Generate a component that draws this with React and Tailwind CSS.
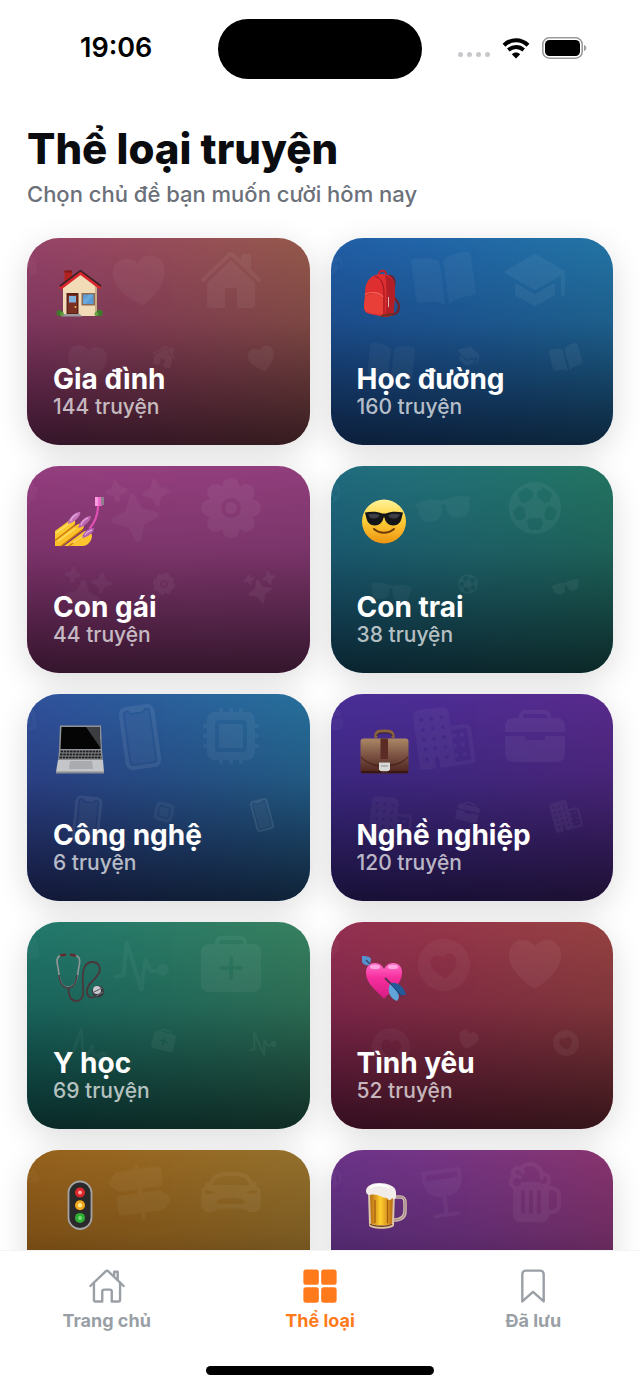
import React, { useState } from "react";
import {
  IoBeer,
  IoBook,
  IoBookmarkOutline,
  IoBriefcase,
  IoBusiness,
  IoCarSport,
  IoFlower,
  IoFootball,
  IoGlasses,
  IoGrid,
  IoHardwareChip,
  IoHeart,
  IoHeartCircle,
  IoHome,
  IoHomeOutline,
  IoMedkit,
  IoPhonePortrait,
  IoPulse,
  IoSchool,
  IoSparkles,
  IoTrailSign,
  IoWine
} from "react-icons/io5";

/* ---------- Card pictograms, all on a 52x52 box ---------- */

function Pictogram({ children }) {
  return (
    <svg viewBox="0 0 52 52" className="size-13" fill="none" aria-hidden="true">
      {children}
    </svg>
  );
}

function House() {
  return (
    <Pictogram>
      <path d="M11.5 3.5h7.5v10l-7.5 6z" fill="#b3221f" />
      <path d="M11.5 3.5h7.5v2h-7.5z" fill="#7d1a1a" />
      <path d="M10 20 27.5 6.5 42 18.5V49H10z" fill="#f2dcb8" />
      <path d="M42 18.5 44 20v28l-2 1z" fill="#c9ab84" />
      <path d="M7 21.5 27.5 6 47.5 21" stroke="#d9262c" strokeWidth="3.4" strokeLinejoin="round" />
      <path d="M7 19 27.5 3.6 48 19" stroke="#3b2227" strokeWidth="1.6" strokeLinejoin="round" />
      <path d="M13.5 26h12v21h-12z" fill="#5b231b" />
      <path d="M15 28h9v18h-9z" fill="#7c3021" />
      <path d="M16 29h7v6.5h-7z" fill="#7fb2dd" />
      <circle cx="22.5" cy="40" r="1" fill="#f0c050" />
      <path d="M28.5 26h13.5v12.5H28.5z" fill="#8d6b50" />
      <path d="M30 27.5h10.5V37H30z" fill="#5a9bd5" />
      <path d="M30 33l6-5.5h4.5L33 37h-3z" fill="#6ba8dc" />
      <path d="M11 47h16l2 2.5H8z" fill="#9a9a9e" />
      <circle cx="6.5" cy="46" r="3" fill="#3f7a2c" />
      <circle cx="9" cy="47" r="2" fill="#5d9a3c" />
      <circle cx="46.5" cy="46" r="3.2" fill="#3f7a2c" />
      <circle cx="43.5" cy="47" r="2" fill="#62a040" />
    </Pictogram>
  );
}

function Backpack() {
  return (
    <Pictogram>
      <path d="M22 8c-1-5 7-6 7-1" stroke="#c4232a" strokeWidth="2" />
      <path d="M31 9c8 0 7 7 5 15s6 9 6 15-3 9-8 8" stroke="#6e2430" strokeWidth="2.4" />
      <path d="M29 11c6 1 8 6 7 13" stroke="#4e252c" strokeWidth="1.5" />
      <path d="M8 26C8 14 14 7 25 7c9 0 13 6 13 14l-1 22c0 5-4 7-9 7L13 47c-4-1-6-3-6-7z" fill="#df2e30" />
      <path d="M28 8c7 2 10 7 10 13l-1 22c0 5-4 7-9 7 2-9 2-33 0-42z" fill="#b21f27" />
      <path d="M18 9c6 2 9 9 9 17v22" stroke="#a31b22" strokeWidth="1.2" />
      <path d="M8 30c2-4 15-4 18 1v17l-13-2c-4-1-6-3-6-7z" fill="#e83f39" />
      <path d="M8 28c3-4 15-3 18 2" stroke="#f3675b" strokeWidth="1.2" />
      <path d="M31 30v9l1 2V30z" fill="#d8b8b0" />
      <path d="M24 49l12-2" stroke="#6e3020" strokeWidth="2" />
    </Pictogram>
  );
}

function Nails() {
  return (
    <Pictogram>
      <path d="M2 36 17 25c4-2 7 2 4 5L2 46z" fill="#fdc930" />
      <path d="M2 44 25 29c5-2 8 2 4 6L9 51H2z" fill="#fbc02a" />
      <path d="M11 51 30 37c4-3 9 0 9 4 0 4-4 10-9 10z" fill="#fcc52f" />
      <path d="M2 45.5 22 30M8 51l21-16M16 51l14-10" stroke="#c9780c" strokeWidth="1.2" />
      <path d="M3 38 16 28.500M5 46l18-13M20 48l10-7" stroke="#ffe06a" strokeWidth="1.4" />
      <path d="M15 29c-1-5 8-13 12-12 2 3-6 11-12 12z" fill="#c574b8" />
      <path d="M25.5 33c-1-5 8-13 12-12 2 3-6 11-12 12z" fill="#bd66b0" />
      <path d="M29.500 43c-1-5 7-11 11-10 2 3-5 9-11 10z" fill="#b263b4" />
      <path d="M17.500 26c1-3 4-6 7-7M28 30c1-3 4-6 7-7M32 40c1-2 4-4 7-5" stroke="#edb3e6" strokeWidth="1.2" />
      <path d="M45 10c0 9-2 16-8 23" stroke="#e04fb4" strokeWidth="2.2" strokeLinecap="round" />
      <path d="M42 2h7v9h-7z" fill="#ee6bcb" />
      <path d="M42 2h3v9h-3z" fill="#ff9be3" />
      <path d="M48 2h3v8h-3z" fill="#8d808c" />
    </Pictogram>
  );
}

function CoolFace() {
  return (
    <Pictogram>
      <defs>
        <linearGradient id="coolFace" x1="0" y1="0" x2="0" y2="1">
          <stop offset="0" stopColor="#fff39a" />
          <stop offset="0.45" stopColor="#ffd03a" />
          <stop offset="1" stopColor="#ee9411" />
        </linearGradient>
      </defs>
      <circle cx="27" cy="26.5" r="22" fill="url(#coolFace)" />
      <path d="M8 17.500c6-1 13-1 17 1h4c4-2 11-2 17-1l-1 4c-1 6-4 9-9 9-5 0-8-4-8.500-8h-1c-.5 4-3.500 8-8.500 8s-8-3-9-9z" fill="#141519" />
      <path d="M11 19.500c4-1 9-1 12 1-1 2-4 3-7 3s-4-2-5-4zM31 20.500c3-2 8-2 12-1-1 2-3 4-6 4s-5-1-6-3z" fill="#3c3e45" />
      <path d="M17 34c6 5 14 5 20 0" stroke="#6b3a08" strokeWidth="2" strokeLinecap="round" />
    </Pictogram>
  );
}

function Laptop() {
  return (
    <Pictogram>
      <path d="M7 2.5h41L49 27H6z" fill="#8f9296" />
      <path d="M8.500 4h38l1 22H7.500z" fill="#050506" />
      <path d="M33 4h13.500l1 21z" fill="#3c3d40" />
      <path d="M6 27h43l1 11H5z" fill="#8e9093" />
      <path d="M7.500 28.500h40M7 31.500h41M6.500 34.500h42" stroke="#1d1e20" strokeWidth="2.2" strokeDasharray="2.6 0.6" />
      <path d="M5 37h45l1 12H3z" fill="#c3c5c8" />
      <path d="M17 38h22l1 8H16z" fill="#a9abae" />
      <path d="M3 48.500h48v2H3z" fill="#8b8d91" />
    </Pictogram>
  );
}

function Briefcase() {
  return (
    <Pictogram>
      <defs>
        <linearGradient id="caseLeather" x1="0" y1="0" x2="0" y2="1">
          <stop offset="0" stopColor="#ab8765" />
          <stop offset="0.5" stopColor="#7a5142" />
          <stop offset="1" stopColor="#4b211c" />
        </linearGradient>
      </defs>
      <path d="M19 15c-1-7 3-7 8-7s10 0 9 7" stroke="#8c643a" strokeWidth="3" />
      <path d="M20 13c0-3 3-3 7-3s8 0 8 3" stroke="#33202a" strokeWidth="1" />
      <rect x="3.5" y="15.5" width="48" height="35" rx="3" fill="url(#caseLeather)" />
      <path d="M4 33c6 7 14 9 23 9s18-2 24-9v2c-6 6-14 9-24 9S10 41 4 35z" fill="#3f1b18" opacity="0.6" />
      <path d="M23.500 15.500H31V36h-7.500z" fill="#5a2c25" />
      <path d="M22 39.500h11v7l-3 3h-5l-3-3z" fill="#d8d8d6" />
      <path d="M24 43h7" stroke="#8e8e8e" strokeWidth="1" />
      <path d="M4 49h47" stroke="#31120f" strokeWidth="1.5" />
    </Pictogram>
  );
}

function Stethoscope() {
  return (
    <Pictogram>
      <path d="M10 4C5 4 3 8 4.500 14c2 8 1 15 5 20 3 3 9 3 12-1 4-5 3-13 5-20 1-6-1-8.500-6-9" stroke="#8f9796" strokeWidth="1.6" />
      <path d="M6 24c1 11 5 13 9 13s8-3 9-13" stroke="#47464b" strokeWidth="1.8" />
      <path d="M8 4.300l4-.6M18 3.700l4 .8" stroke="#632a2b" strokeWidth="2.4" strokeLinecap="round" />
      <path d="M15.500 37c0 9 3 13 7.500 13 6 0 8-5 7-14-1-14 0-25 9-25 8 0 10 8 5 14-5 7-10 8-10 15 0 5 3 8 8 6" stroke="#4a363b" strokeWidth="1.8" />
      <circle cx="45" cy="40.5" r="6" fill="#3a383d" />
      <circle cx="44" cy="39" r="4" fill="#c9cacf" />
      <path d="M41 41l8-4M43 45l7-4" stroke="#69686d" strokeWidth="1.2" />
    </Pictogram>
  );
}

function ArrowHeart() {
  return (
    <Pictogram>
      <defs>
        <linearGradient id="arrowHeart" x1="0" y1="0" x2="0" y2="1">
          <stop offset="0" stopColor="#ff70cb" />
          <stop offset="0.4" stopColor="#f7309f" />
          <stop offset="1" stopColor="#d41a83" />
        </linearGradient>
      </defs>
      <path d="M5 5c4 0 7 0 9 3l-1 6c-4 1-8-1-8-4z" fill="#5493cf" />
      <path d="M9 9l7 7" stroke="#3a4a70" strokeWidth="1.5" />
      <path d="M27 48C21 41 9 33 9 22c0-7 4-10 9-10 4 0 7 2 9 6 2-4 5-6 9-6 6 0 9 4 9 10 0 11-12 19-18 26z" fill="url(#arrowHeart)" />
      <ellipse cx="18" cy="16" rx="5" ry="2.2" fill="#ffa6df" />
      <ellipse cx="36" cy="16" rx="5" ry="2.2" fill="#ffa6df" />
      <path d="M28 27l8 8" stroke="#54304e" strokeWidth="2" />
      <path d="M34 32c7-1 13 4 15 12-6 1-11-3-15-12z" fill="#235a99" />
      <path d="M33 33c-3 6-1 14 7 17 5-5-1-12-7-17z" fill="#5ea4d9" />
      <path d="M34 33l11 13" stroke="#173d70" strokeWidth="1" />
    </Pictogram>
  );
}

function TrafficLight() {
  return (
    <Pictogram>
      <rect x="15.5" y="2.5" width="23" height="47.5" rx="11.5" fill="#2b2a2b" stroke="#a6a3a5" strokeWidth="1.8" />
      <circle cx="27" cy="13.5" r="5" fill="#dd262b" />
      <circle cx="27" cy="13.5" r="2" fill="#ffa59a" />
      <circle cx="27" cy="26.2" r="5" fill="#f2a81d" />
      <circle cx="27" cy="26.2" r="2.2" fill="#ffe98a" />
      <circle cx="27" cy="38.9" r="5" fill="#2fae36" />
      <circle cx="27" cy="38.9" r="2" fill="#77e070" />
    </Pictogram>
  );
}

function BeerMug() {
  return (
    <Pictogram>
      <defs>
        <linearGradient id="beerFill" x1="0" y1="0" x2="1" y2="0">
          <stop offset="0" stopColor="#b86a12" />
          <stop offset="0.45" stopColor="#ffce2e" />
          <stop offset="1" stopColor="#b96a14" />
        </linearGradient>
      </defs>
      <path d="M37 18h6c4 0 5 2 5 6v8c0 6-4 9-11 9" stroke="#cfb9ac" strokeWidth="3.6" />
      <path d="M37 18h6c4 0 5 2 5 6v8c0 6-4 9-11 9" stroke="#8d6d77" strokeWidth="0.8" />
      <path d="M11 13h27l-1 33c0 5-25 5-25 0z" fill="#dcc5a4" />
      <path d="M13 14h23l-1 30c-1 3-20 3-21 0z" fill="url(#beerFill)" />
      <path d="M18 21v23M30.500 21v23" stroke="#a55a10" strokeWidth="1.2" />
      <path d="M13 45c4 3 19 3 22 0" stroke="#744018" strokeWidth="1.4" />
      <path d="M9 12c0-5 6-8 13-8 8 0 17 3 17 9v5c-1 3-3 2-4 1-1 3-4 2-5 0-6 0-9-5-17-3-3 0-4-2-4-4z" fill="#f1ecea" />
      <path d="M13 9c4-4 14-4 19 0" stroke="#ffffff" strokeWidth="2" />
    </Pictogram>
  );
}

/* ---------- Data ---------- */

const CATEGORIES = [
  { id: "family", name: "Gia đình", count: 144, Picture: House, Main: IoHome, Side: IoHeart, bg: "from-[#953a76] via-[#97485f] to-[#94584a]" },
  { id: "school", name: "Học đường", count: 160, Picture: Backpack, Main: IoSchool, Side: IoBook, bg: "from-[#2056a4] via-[#2164a8] to-[#2374a4]" },
  { id: "girls", name: "Con gái", count: 44, Picture: Nails, Main: IoFlower, Side: IoSparkles, bg: "from-[#943a7f] via-[#943f7f] to-[#903e7c]" },
  { id: "boys", name: "Con trai", count: 38, Picture: CoolFace, Main: IoFootball, Side: IoGlasses, bg: "from-[#1d6488] via-[#227079] to-[#237461]" },
  { id: "tech", name: "Công nghệ", count: 6, Picture: Laptop, Main: IoHardwareChip, Side: IoPhonePortrait, bg: "from-[#34439c] via-[#2c5a9c] to-[#26709b]" },
  { id: "jobs", name: "Nghề nghiệp", count: 120, Picture: Briefcase, Main: IoBriefcase, Side: IoBusiness, bg: "from-[#442e9b] via-[#4c2d94] to-[#582a8c]" },
  { id: "medical", name: "Y học", count: 69, Picture: Stethoscope, Main: IoMedkit, Side: IoPulse, bg: "from-[#18746f] via-[#277a69] to-[#37805f]" },
  { id: "love", name: "Tình yêu", count: 52, Picture: ArrowHeart, Main: IoHeart, Side: IoHeartCircle, bg: "from-[#93285a] via-[#95344c] to-[#964241]" },
  { id: "traffic", Picture: TrafficLight, Main: IoCarSport, Side: IoTrailSign, bg: "from-[#945b17] via-[#976620] to-[#93702c]" },
  { id: "drinks", Picture: BeerMug, Main: IoBeer, Side: IoWine, bg: "from-[#5f328c] via-[#733486] to-[#88336d]" }
];

const TABS = [
  { id: "home", label: "Trang chủ", Icon: IoHomeOutline },
  { id: "categories", label: "Thể loại", Icon: IoGrid },
  { id: "saved", label: "Đã lưu", Icon: IoBookmarkOutline }
];

/* ---------- Layout pieces ---------- */

function StatusBar() {
  return (
    <div className="relative h-24 shrink-0 flex items-center justify-between pl-20 pr-[53px]">
      <span className="text-[27px] leading-8 font-semibold text-black">19:06</span>
      <div className="absolute left-1/2 top-[19px] -translate-x-1/2 w-[204px] h-[60px] rounded-full bg-black" />
      <div className="flex items-center gap-3">
        <div className="flex gap-1 pt-3">
          <span className="size-[5px] rounded-full bg-[#c9c7cc]" />
          <span className="size-[5px] rounded-full bg-[#c9c7cc]" />
          <span className="size-[5px] rounded-full bg-[#c9c7cc]" />
          <span className="size-[5px] rounded-full bg-[#c9c7cc]" />
        </div>
        <svg viewBox="0 0 28 21" className="w-7 h-[21px]" fill="none" aria-hidden="true">
          <path d="M2 7.200c7-6.600 17-6.600 24 0" stroke="#000" strokeWidth="4.2" />
          <path d="M6.300 12c4.500-4 10.900-4 15.400 0" stroke="#000" strokeWidth="3.8" />
          <path d="M9.800 16.200c2.500-2.200 5.900-2.200 8.400 0L14 20.600z" fill="#000" />
        </svg>
        <svg viewBox="0 0 45 22" className="w-[45px] h-[22px]" fill="none" aria-hidden="true">
          <rect x="0.8" y="0.8" width="39.4" height="20.4" rx="6.5" stroke="#9b9b9d" strokeWidth="1.6" />
          <rect x="3" y="3" width="35" height="16" rx="4.5" fill="#000" />
          <path d="M42 8c3 1 3 5 0 6z" fill="#9b9b9d" />
        </svg>
      </div>
    </div>
  );
}

// Faint icons scattered behind the card text
function Watermark({ Main, Side }) {
  return (
    <div className="absolute inset-0 text-white/5" aria-hidden="true">
      <Main className="absolute -left-4 top-3 size-7 -rotate-12 opacity-60" />
      <Side className="absolute left-[81px] top-[11px] size-16 -rotate-8 opacity-80" />
      <Main className="absolute left-[172px] top-[10px] size-16" />
      <Side className="absolute left-9 top-[102px] size-12 rotate-6 opacity-80" />
      <Main className="absolute left-[125px] top-[106px] size-6 rotate-15" />
      <Side className="absolute left-[219px] top-[105px] size-8 -rotate-15" />
    </div>
  );
}

function CategoryCard({ category }) {
  const { name, count, Picture, Main, Side, bg } = category;

  return (
    <button
      type="button"
      className={`relative h-[207px] overflow-hidden rounded-[32px] bg-linear-60 ${bg} text-left`}
    >
      <div className="absolute inset-0 bg-linear-to-b from-black/0 via-black/16 via-40% to-black/65" />
      <Watermark Main={Main} Side={Side} />
      <div className="relative h-full flex flex-col justify-between px-[26px] pt-[29px] pb-[26px]">
        <Picture />
        {name && (
          <div className="flex flex-col">
            <span className="text-[28px] leading-8 font-bold text-white">{name}</span>
            <span className="text-[21px] leading-6 font-medium text-white/70">{count} truyện</span>
          </div>
        )}
      </div>
    </button>
  );
}

function TabBar({ active, onChange }) {
  return (
    <nav className="relative z-10 h-[138px] shrink-0 border-t border-[#f3f3f4] bg-white">
      <div className="grid grid-cols-3 pt-4">
        {TABS.map(({ id, label, Icon }) => (
          <a
            key={id}
            href={`#${id}`}
            onClick={() => onChange(id)}
            className={`flex flex-col items-center gap-1 ${active === id ? "text-[#ff7a1a]" : "text-[#9a9fa6]"}`}
          >
            <Icon className="size-[38px]" />
            <span className="text-[18px] leading-6 font-bold">{label}</span>
          </a>
        ))}
      </div>
      <div className="absolute bottom-[13px] left-1/2 -translate-x-1/2 w-[228px] h-[9px] rounded-full bg-black" />
    </nav>
  );
}

export default function App() {
  const [tab, setTab] = useState("categories");

  return (
    <div className="h-screen flex flex-col overflow-hidden bg-white font-['Inter',sans-serif]">
      <StatusBar />

      <main className="flex-1 min-h-0 overflow-hidden px-[27px] pt-7">
        <h1 className="text-[42px] leading-[50px] font-extrabold text-[#0b0c0f]">Thể loại truyện</h1>
        <p className="mt-1 text-[22px] leading-8 font-medium text-[#6b7079]">Chọn chủ đề bạn muốn cười hôm nay</p>

        <div className="mt-7 grid grid-cols-2 gap-[21px]">
          {CATEGORIES.map((category) => (
            <div key={category.id} className="flex flex-col rounded-[32px] shadow-[0_8px_32px_rgba(0,0,0,0.14)]">
              <CategoryCard category={category} />
            </div>
          ))}
        </div>
      </main>

      <TabBar active={tab} onChange={setTab} />
    </div>
  );
}
